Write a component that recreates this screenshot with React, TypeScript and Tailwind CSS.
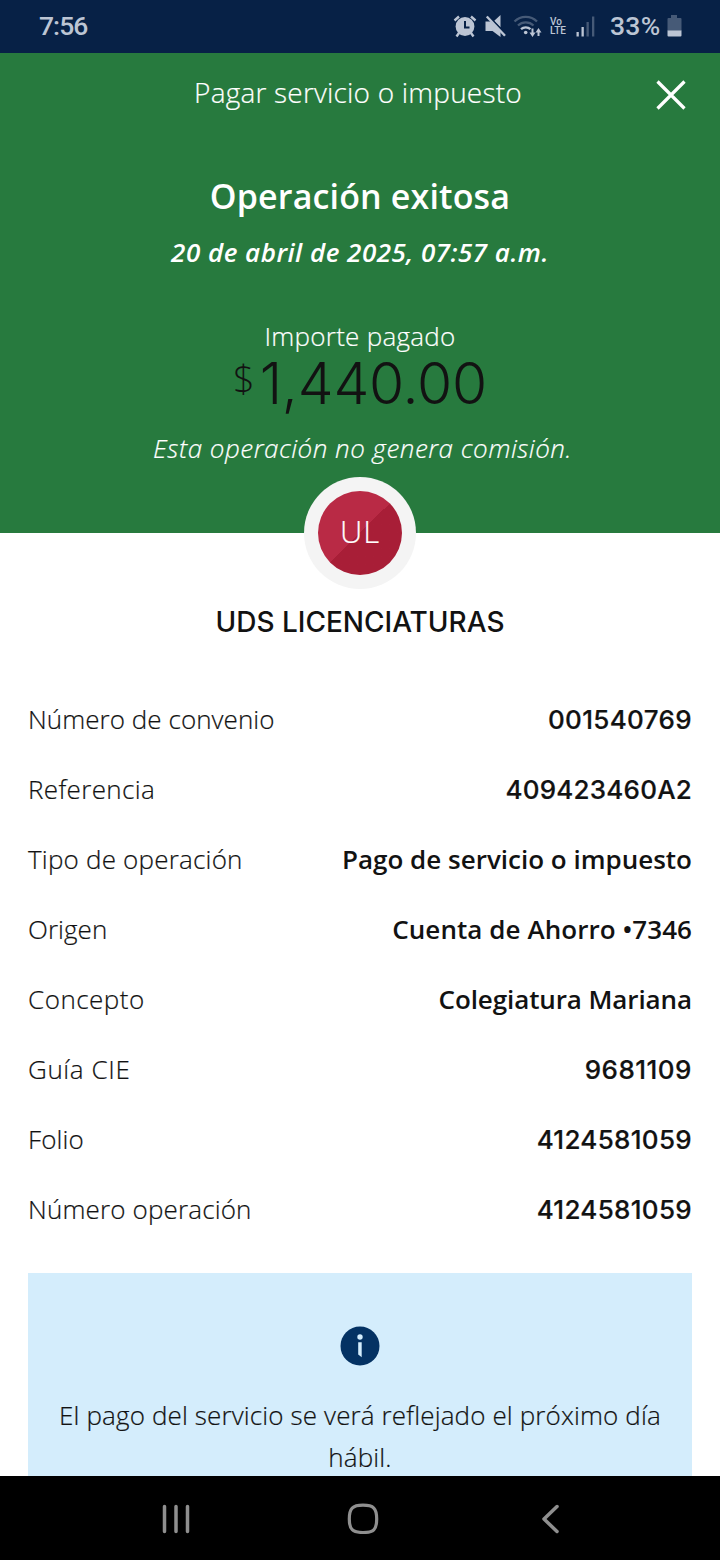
type Detail = { label: string; value: string; labelClass: string; valueClass: string };

const details: Detail[] = [
  { label: 'Número de convenio', value: '001540769', labelClass: 'tracking-[0.05px]', valueClass: "pt-[2px] font-['Inter',sans-serif] font-medium tracking-[0.35px] [-webkit-text-stroke:0.2px]" },
  { label: 'Referencia', value: '409423460A2', labelClass: 'tracking-[0.35px]', valueClass: "pt-[2px] font-['Inter',sans-serif] font-medium tracking-[0.2px] [-webkit-text-stroke:0.2px]" },
  { label: 'Tipo de operación', value: 'Pago de servicio o impuesto', labelClass: 'tracking-[0.2px]', valueClass: 'font-semibold' },
  { label: 'Origen', value: 'Cuenta de Ahorro •7346', labelClass: 'tracking-[0.05px]', valueClass: 'font-semibold tracking-[0.06px]' },
  { label: 'Concepto', value: 'Colegiatura Mariana', labelClass: 'tracking-[0.5px]', valueClass: 'font-semibold tracking-[-0.1px]' },
  { label: 'Guía CIE', value: '9681109', labelClass: 'tracking-[0.6px]', valueClass: "pt-[2px] font-['Inter',sans-serif] font-medium tracking-[0.5px] [-webkit-text-stroke:0.2px]" },
  { label: 'Folio', value: '4124581059', labelClass: 'tracking-[0.1px]', valueClass: "pt-[2px] font-['Inter',sans-serif] font-medium tracking-[0.3px] [-webkit-text-stroke:0.2px]" },
  { label: 'Número operación', value: '4124581059', labelClass: 'tracking-[0.15px]', valueClass: "pt-[2px] font-['Inter',sans-serif] font-medium tracking-[0.3px] [-webkit-text-stroke:0.2px]" },
];

function StatusBar() {
  return (
    <div className="flex h-[53px] shrink-0 items-center bg-[#072146] pr-[37px] pb-px pl-[39px] font-['Roboto',sans-serif] text-[26.5px] font-medium text-[#bcc5d4]">
      <span className="tracking-[-0.95px]">7:56</span>
      <div className="ml-auto flex items-center">
        <svg className="h-6 w-6" viewBox="0 0 24 24" fill="none">
          <path d="M1.5 6.5 6 2.5M22.5 6.5 18 2.5" stroke="currentColor" strokeWidth="2.4" />
          <path d="m6 19-2.5 3.5M18 19l2.5 3.5" stroke="currentColor" strokeWidth="2.4" />
          <circle cx="12" cy="12.5" r="9.4" fill="currentColor" />
          <path d="M12 7v6.5h4.5" stroke="#072146" strokeWidth="2" />
        </svg>
        <svg className="ml-2 h-6 w-6" viewBox="0 0 24 24" fill="none">
          <path d="M0.500 7.500h5L15.500 17.500v5.500L7.500 17h-7zM9 7l6.500-6v12.500z" fill="currentColor" />
          <path d="M3.300 1.300 21.500 20.500" stroke="#072146" strokeWidth="1.200" />
          <path d="M1.800 2.500 20 21.800" stroke="currentColor" strokeWidth="2.400" />
        </svg>
        <svg className="ml-1 h-6 w-[30px]" viewBox="0 0 30 24" fill="none" stroke="currentColor">
          <path d="M1.500 7.500a16 16 0 0 1 22.500 0" strokeWidth="2.300" opacity="0.35" />
          <path d="M5 11.500a11.200 11.200 0 0 1 15.500 0" strokeWidth="2.300" opacity="0.35" />
          <path d="M8 15.200a7 7 0 0 1 9.500 0" strokeWidth="2.300" />
          <circle cx="12.700" cy="18.500" r="1.800" fill="currentColor" stroke="none" />
          <path d="M19.500 14.500v6M25.500 22v-5" strokeWidth="2" />
          <path d="M16.500 18.500h6l-3 4.500zM22.500 18.500h6l-3-4.500z" fill="currentColor" stroke="none" />
        </svg>
        <span className="ml-[7px] flex w-[17px] flex-col text-[10px] leading-[9px] font-medium">
          <span>Vo</span>
          <span>LTE</span>
        </span>
        <svg className="ml-[9px] h-6 w-[19px]" viewBox="0 0 19 24" fill="currentColor">
          <rect x="0.500" y="18" width="2.300" height="4.500" />
          <rect x="5.500" y="13" width="2.300" height="9.500" />
          <rect x="10.500" y="8" width="2.300" height="14.500" opacity="0.35" />
          <rect x="16" y="2.500" width="2.300" height="20" opacity="0.35" />
        </svg>
        <span className="ml-[15px] w-[57px] tracking-[0.3px]">33%</span>
        <svg className="mr-px h-6 w-[15px]" viewBox="0 0 15 24" fill="currentColor">
          <path d="M4 1h6v3h3.500q1 0 1 1v12H0.500V5q0-1 1-1H4z" opacity="0.35" />
          <path d="M0.500 16.500h14v5q0 1-1 1h-12q-1 0-1-1z" />
        </svg>
      </div>
    </div>
  );
}

function Hero() {
  return (
    <header className="flex h-[480px] shrink-0 flex-col items-center bg-[#277a3e] text-white">
      <div className="grid w-full grid-cols-[60px_1fr_60px] items-center pt-[14px] pb-[22px]">
        <span />
        <h1 className="mr-[4px] text-center text-[28px] leading-[50px] font-light tracking-[0.2px] [-webkit-text-stroke:0.2px]">Pagar servicio o impuesto</h1>
        <svg className="mt-[6px] ml-[-5px] h-8 w-8" viewBox="0 0 32 32" fill="none" stroke="currentColor" strokeWidth="3.200">
          <path d="M2.500 2.500 29.500 29.500M29.500 2.500 2.500 29.500" />
        </svg>
      </div>
      <h2 className="mt-[32px] text-[34px] leading-[50px] font-semibold tracking-[0.15px]">Operación exitosa</h2>
      <p className="mt-[11px] text-[26px] leading-[40px] font-semibold tracking-[0.48px] italic">20 de abril de 2025, 07:57 a.m.</p>
      <p className="mt-[44px] text-[26px] leading-[40px] font-light tracking-[0.25px] [-webkit-text-stroke:0.2px]">Importe pagado</p>
      <p className="flex items-start font-light text-[#121212]">
        <span className="mr-[5px] text-[38px] leading-[44px]">$</span>
        <span className="font-['Inter',sans-serif] text-[57px] leading-[56px] tracking-[-0.2px]">1,440.00</span>
      </p>
      <p className="mt-[16px] ml-[5px] text-[26px] leading-[40px] font-light tracking-[0.49px] italic [-webkit-text-stroke:0.2px]">Esta operación no genera comisión.</p>
    </header>
  );
}

function NavBar() {
  return (
    <nav className="flex h-[84px] shrink-0 items-center bg-black pl-[160px] text-[#8f8f8f]">
      <svg className="h-8 w-8" viewBox="0 0 32 32" fill="none" stroke="currentColor" strokeWidth="3.500" strokeLinecap="round">
        <path d="M4.500 4.500v25M16 4.500v25M27.500 4.500v25" />
      </svg>
      <svg className="ml-[155px] h-8 w-8" viewBox="0 0 32 32" fill="none" stroke="currentColor" strokeWidth="3.200">
        <path d="M16 3.200c10.500 0 13.700 3 13.700 13.800S26.500 30.500 16 30.500 2.300 27.500 2.300 17 5.500 3.200 16 3.200z" />
      </svg>
      <svg className="ml-[158px] h-8 w-6" viewBox="0 0 24 32" fill="none" stroke="currentColor" strokeWidth="3.500" strokeLinecap="round" strokeLinejoin="round">
        <path d="M20 4.500 7 17l13 12.500" />
      </svg>
    </nav>
  );
}

export default function App() {
  return (
    <div className="flex h-[1560px] w-[720px] flex-col overflow-hidden bg-white font-['Open_Sans',sans-serif] text-[#121212]">
      <StatusBar />
      <Hero />
      <main className="flex min-h-0 flex-1 flex-col px-7">
        <div className="relative -mt-14 flex h-28 w-28 shrink-0 items-center justify-center self-center rounded-full bg-[#f4f4f4]">
          <div className="flex h-[84px] w-[84px] items-center justify-center rounded-full bg-linear-to-br from-[#b92a45] from-50% to-[#a81e37] to-50% pb-[3px] text-[31px] font-light tracking-[0.8px] text-white [-webkit-text-stroke:0.2px]">
            UL
          </div>
        </div>
        <h3 className="mt-[12px] text-center font-['Inter',sans-serif] text-[28px] leading-[42px] font-medium">UDS LICENCIATURAS</h3>
        <dl className="mt-[41px] flex flex-col text-[26px]">
          {details.map((d) => (
            <div key={d.label} className="flex h-[70px] items-center justify-between leading-[40px]">
              <dt className={'font-light [-webkit-text-stroke:0.2px] ' + d.labelClass}>{d.label}</dt>
              <dd className={d.valueClass}>{d.value}</dd>
            </div>
          ))}
        </dl>
        <section className="mt-[29px] flex min-h-0 flex-1 flex-col items-center bg-[#d4edfc] pt-[53px]">
          <svg className="h-10 w-10 shrink-0" viewBox="0 0 40 40">
            <circle cx="20" cy="20" r="19.500" fill="#043263" />
            <circle cx="20" cy="11" r="2.700" fill="#d4edfc" />
            <path d="M18.200 16.200h3.500v15l-3.500-2.700z" fill="#d4edfc" />
          </svg>
          <p className="mt-[28px] text-center text-[26px] leading-[42px] font-light tracking-[0.13px] [-webkit-text-stroke:0.2px]">
            El pago del servicio se verá reflejado el próximo día
            <br />
            hábil.
          </p>
        </section>
      </main>
      <NavBar />
    </div>
  );
}
